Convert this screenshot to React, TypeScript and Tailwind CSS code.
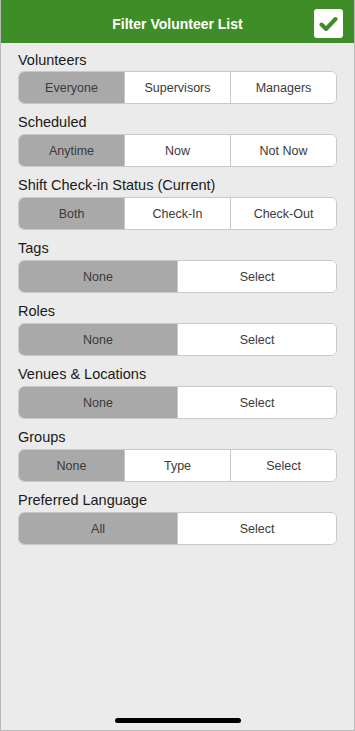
import React from "react";

type Sec = { label: string; opts: string[] };

const sections: Sec[] = [
  { label: "Volunteers", opts: ["Everyone", "Supervisors", "Managers"] },
  { label: "Scheduled", opts: ["Anytime", "Now", "Not Now"] },
  { label: "Shift Check-in Status (Current)", opts: ["Both", "Check-In", "Check-Out"] },
  { label: "Tags", opts: ["None", "Select"] },
  { label: "Roles", opts: ["None", "Select"] },
  { label: "Venues & Locations", opts: ["None", "Select"] },
  { label: "Groups", opts: ["None", "Type", "Select"] },
  { label: "Preferred Language", opts: ["All", "Select"] },
];

function Segmented({ opts }: { opts: string[] }) {
  return (
    <div className="flex h-[33px] rounded-[6px] border border-[#c9c9c9] bg-white overflow-hidden">
      {opts.map((o, i) => (
        <div
          key={o}
          className={
            "flex-1 flex items-center justify-center pt-[1px] text-[12.5px] text-[#3a3a3a] " +
            (i === 0 ? "bg-[#a9a9aa] " : "bg-white ") +
            (i > 0 ? "border-l border-[#c9c9c9]" : "")
          }
        >
          {o}
        </div>
      ))}
    </div>
  );
}

export default function App() {
  return (
    <div
      className="w-[355px] h-[731px] flex flex-col bg-[#ebebeb] border-x border-b border-[#b9b9b9] overflow-hidden"
      style={{ fontFamily: '"Liberation Sans", Arial, sans-serif' }}
    >
      <div className="h-[43px] bg-[#3f8d27] flex items-center justify-center relative shrink-0">
        <span className="text-white font-bold text-[14px] pt-[5px]">Filter Volunteer List</span>
        <div className="absolute left-[313px] top-[9px] w-[29px] h-[29px] bg-white rounded-[3px] flex items-center justify-center">
          <svg width="19" height="16" viewBox="0 0 19 16">
            <path d="M2.5 8.5 L7 13 L16.5 3" fill="none" stroke="#3f8d27" strokeWidth="4" strokeLinecap="round" strokeLinejoin="round" />
          </svg>
        </div>
      </div>
      <div className="flex-1 flex flex-col pl-[17px] pr-[17px]">
        {sections.map((s, idx) => (
          <div key={s.label} className="flex flex-col">
            <div className={"text-[14.5px] leading-[18px] text-[#1a1a1a] " + (idx === 0 ? "pt-[8px] pb-[2px]" : "pt-[9px] pb-[3px]")}>
              {s.label}
            </div>
            <Segmented opts={s.opts} />
          </div>
        ))}
        <div className="flex-1" />
        <div className="flex justify-center pb-[7px]">
          <div className="w-[126px] h-[5px] rounded-full bg-black" />
        </div>
      </div>
    </div>
  );
}
